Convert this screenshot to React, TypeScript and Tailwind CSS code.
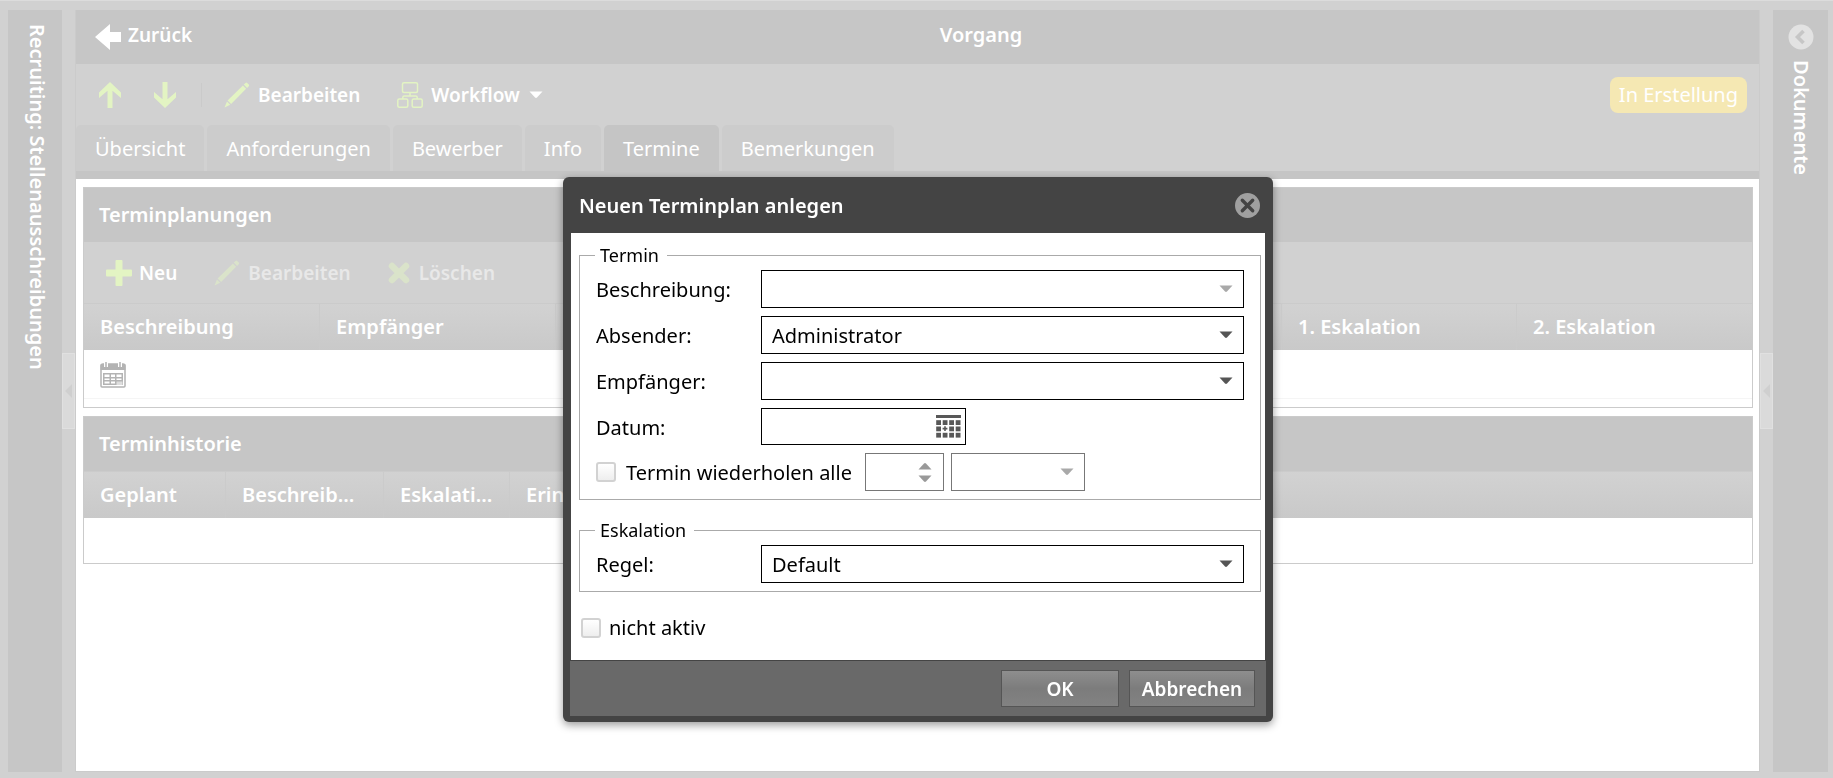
import type { ReactNode } from 'react';

function Pencil() {
  return (
    <svg width="26" height="26" viewBox="0 0 26 26" fill="currentColor" aria-hidden="true">
      <path d="M0.5 25.5 L3 19.5 L6.2 22.7 Z" />
      <path d="M3.6 18.6 L18.9 3.6 L22.1 6.8 L7.1 22.1 Z" />
      <path d="M19.8 2.6 L21.5 0.9 Q22.3 0.2 23.1 0.9 L24.8 2.6 Q25.6 3.4 24.8 4.3 L23.1 6 Z" />
    </svg>
  );
}

function ArrowUp() {
  return (
    <svg width="22" height="26" viewBox="0 0 22 26" fill="currentColor" aria-hidden="true">
      <path d="M11 0 L22 10.5 V16 L13.5 8.8 V26 H8.5 V8.8 L0 16 V10.5 Z" />
    </svg>
  );
}

function ArrowDown() {
  return (
    <svg width="22" height="26" viewBox="0 0 22 26" fill="currentColor" aria-hidden="true">
      <path d="M11 26 L22 15.5 V10 L13.5 17.2 V0 H8.5 V17.2 L0 10 V15.5 Z" />
    </svg>
  );
}

function WorkflowIcon() {
  return (
    <svg width="26" height="26" viewBox="0 0 26 26" fill="none" stroke="currentColor" strokeWidth="1.5" aria-hidden="true">
      <rect x="5.5" y="0.8" width="15" height="9.7" rx="1.5" />
      <rect x="0.8" y="17" width="10" height="8.2" rx="1.5" />
      <rect x="15.2" y="17" width="10" height="8.2" rx="1.5" />
      <path d="M13 10.5 V14 M5.8 17 V15.5 Q5.8 14 7.3 14 H18.7 Q20.2 14 20.2 15.5 V17" />
    </svg>
  );
}

function RowCalendar() {
  return (
    <svg width="26" height="26" viewBox="0 0 26 26" aria-hidden="true">
      <path d="M1 4 Q1 2 3 2 H23 Q25 2 25 4 V24 Q25 25 24 25 H2 Q1 25 1 24 Z" fill="#fff" stroke="#b3b3b3" strokeWidth="1.5" />
      <path d="M0.5 3 Q0.5 2 2 2 H24 Q25.5 2 25.5 3 V8 H0.5 Z" fill="#b3b3b3" />
      <path d="M6 0 V5 M20 0 V5" stroke="#fff" strokeWidth="4" />
      <path d="M6 0 V5 M20 0 V5" stroke="#b3b3b3" strokeWidth="1.5" />
      <rect x="3" y="11" width="20" height="12" fill="#b3b3b3" />
      <path d="M4.5 12.5h5v2.5h-5z M11 12.5h4v2.5h-4z M16.5 12.5h5v2.5h-5z M4.5 16.5h5v1.5h-5z M11 16.5h4v1.5h-4z M16.5 16.5h5v1.5h-5z M4.5 19.5h5v2h-5z M11 19.5h4v2h-4z" fill="#fff" />
      <path d="M16.5 19.5h6v3.5h-6z" fill="#ddd" />
    </svg>
  );
}

function PickerCalendar() {
  const cells = [0, 1, 2, 3];
  const rows = [0, 1, 2];
  return (
    <svg width="25" height="23" viewBox="0 0 25 23" fill="#585858" aria-hidden="true">
      <rect x="0" y="0" width="25" height="3" />
      {rows.map((r) =>
        cells.map((c) =>
          r === 1 && c === 1 ? (
            <path key="mid" d="M8.2 11.2h1.6v1.6h1.6v1.6H9.8V16H8.2v-1.6H6.6v-1.6h1.6z" />
          ) : (
            <rect key={`${r}-${c}`} x={c * 6.5 + 0.2} y={r * 6.3 + 5.2} width="4.8" height="4.8" />
          ),
        ),
      )}
    </svg>
  );
}

function Caret({ className }: { className: string }) {
  return (
    <svg width="14" height="8" viewBox="0 0 14 8" fill="currentColor" className={className} aria-hidden="true">
      <path d="M0.5 0.5 H13.5 L8 6.6 Q7 7.5 6 6.6 Z" />
    </svg>
  );
}

function SplitHandle() {
  return (
    <div className="flex w-[13px] shrink-0 items-center">
      <button
        type="button"
        aria-label="Bereich ein- oder ausklappen"
        className="flex h-19 w-full items-center justify-center border border-[#e0e0e0] bg-[#dadada] text-[#cfcfcf]"
      >
        <svg width="7" height="14" viewBox="0 0 7 14" fill="currentColor" aria-hidden="true">
          <path d="M7 0 V14 L0 7 Z" />
        </svg>
      </button>
    </div>
  );
}

function Panel({ title, children }: { title: string; children: ReactNode }) {
  return (
    <section className="border border-[#cbcbcb]">
      <h2 className="bg-[#c6c6c6] px-[15px] py-[13px] text-[20px] leading-7 font-semibold">{title}</h2>
      {children}
    </section>
  );
}

const headRow = 'bg-linear-to-b from-[#d2d2d2] to-[#c9c9c9] text-left';
const headCell = 'h-[47px] truncate border-t border-r border-[#cbcbcb] px-4 text-[20px] leading-7 font-semibold last:border-r-0';

const planCols = [
  { label: 'Beschreibung', width: 'w-[236px]' },
  { label: 'Empfänger', width: 'w-[236px]' },
  { label: '', width: 'w-auto' },
  { label: '1. Eskalation', width: 'w-[235px]' },
  { label: '2. Eskalation', width: 'w-[235px]' },
];

const historyCols = [
  { label: 'Geplant', width: 'w-[142px]' },
  { label: 'Beschreibung', width: 'w-[158px]' },
  { label: 'Eskalation', width: 'w-[126px]' },
  { label: 'Erinnerung', width: 'w-auto' },
];

const tabs = ['Übersicht', 'Anforderungen', 'Bewerber', 'Info', 'Termine', 'Bemerkungen'];

function SelectField({ id, label, value, muted }: { id: string; label: string; value?: string; muted?: boolean }) {
  return (
    <div className="flex items-center">
      <label htmlFor={id} className="w-[165px] shrink-0 pt-[2px]">
        {label}
      </label>
      <div className="relative flex-1">
        <select id={id} className="block h-[38px] w-full appearance-none border border-black bg-white px-[10px] pt-[2px]">
          <option>{value ?? ''}</option>
        </select>
        <Caret
          className={`pointer-events-none absolute top-1/2 right-[11px] -translate-y-1/2 ${muted ? 'text-[#a9a9a9]' : 'text-[#555]'}`}
        />
      </div>
    </div>
  );
}

const checkbox =
  'size-5 shrink-0 appearance-none rounded-[3px] border-2 border-[#d2d2d2] bg-linear-to-b from-white to-[#eee] checked:bg-[#999]';
const fieldset = 'border border-[#aaa] px-4 pt-px pb-2';
const legend = '-ml-[1px] pr-2 pl-[5px] text-[18px] leading-7';
const dialogButton =
  'h-[37px] border border-[#555] bg-linear-to-b from-[#8e8e8e] via-[#7c7c7c] to-[#828282] text-[19px] leading-7 font-semibold text-white';

function TerminDialog() {
  return (
    <div className="fixed inset-0 flex items-start justify-center pt-[177px] pl-[3px]">
      <div
        role="dialog"
        aria-labelledby="dialog-title"
        className="w-[710px] rounded-md bg-[#444] px-[7px] pb-[6px] text-[20px] leading-7 text-black shadow-[0_3px_9px_rgba(0,0,0,0.4)]"
      >
        <div className="flex h-14 items-center justify-between pr-[6px] pl-[9px]">
          <h1 id="dialog-title" className="pt-[2px] text-[20px] leading-7 font-semibold text-white">
            Neuen Terminplan anlegen
          </h1>
          <button type="button" aria-label="Schließen">
            <svg width="25" height="25" viewBox="0 0 25 25">
              <circle cx="12.5" cy="12.5" r="12.5" fill="#a0a0a0" />
              <path d="M7.3 7.3 L17.7 17.7 M17.7 7.3 L7.3 17.7" stroke="#444" strokeWidth="3.4" strokeLinecap="round" />
            </svg>
          </button>
        </div>

        <form>
          <div className="mx-px bg-white pt-2 pr-1 pb-[18px] pl-2">
            <fieldset className={fieldset}>
              <legend className={legend}>Termin</legend>
              <div className="flex flex-col gap-2">
                <SelectField id="beschreibung" label="Beschreibung:" muted />
                <SelectField id="absender" label="Absender:" value="Administrator" />
                <SelectField id="empfaenger" label="Empfänger:" />
                <div className="flex items-center">
                  <label htmlFor="datum" className="w-[165px] shrink-0 pt-[2px]">
                    Datum:
                  </label>
                  <div className="flex h-[37px] w-[205px] items-center border border-black pr-1">
                    <input id="datum" type="text" className="h-full min-w-0 flex-1 px-[10px] outline-none" />
                    <button type="button" aria-label="Datum wählen">
                      <PickerCalendar />
                    </button>
                  </div>
                </div>
                <div className="flex items-center">
                  <input id="wiederholen" type="checkbox" className={checkbox} />
                  <label htmlFor="wiederholen" className="w-[249px] pt-[2px] pl-[10px]">
                    Termin wiederholen alle
                  </label>
                  <div className="flex h-[38px] w-[79px] items-center border border-[#777] pr-[11px]">
                    <input type="text" aria-label="Intervall" className="h-full min-w-0 flex-1 px-2 outline-none" />
                    <div className="flex flex-col gap-[5px] text-[#999]">
                      <Caret className="rotate-180" />
                      <Caret className="" />
                    </div>
                  </div>
                  <div className="relative ml-[7px] w-[134px]">
                    <select aria-label="Einheit" className="block h-[38px] w-full appearance-none border border-[#777] bg-white px-[10px]">
                      <option></option>
                    </select>
                    <Caret className="pointer-events-none absolute top-1/2 right-[11px] -translate-y-1/2 text-[#a9a9a9]" />
                  </div>
                </div>
              </div>
            </fieldset>

            <fieldset className={`mt-4 ${fieldset}`}>
              <legend className={legend}>Eskalation</legend>
              <SelectField id="regel" label="Regel:" value="Default" />
            </fieldset>

            <div className="mt-[22px] flex items-center pl-[2px]">
              <input id="inaktiv" type="checkbox" className={checkbox} />
              <label htmlFor="inaktiv" className="pl-2">
                nicht aktiv
              </label>
            </div>
          </div>

          <div className="mt-px flex justify-end gap-[10px] bg-[#696969] py-[9px] pr-[11px]">
            <button type="button" className={`w-[118px] ${dialogButton}`}>
              OK
            </button>
            <button type="button" className={`w-[126px] ${dialogButton}`}>
              Abbrechen
            </button>
          </div>
        </form>
      </div>
    </div>
  );
}

export default function App() {
  return (
    <div className="flex min-h-screen border-t border-[#dcdcdc] bg-[#d1d1d1] pt-[9px] pr-[5px] pb-[6px] pl-2 font-['Noto_Sans','Open_Sans',sans-serif] text-white">
      <aside className="flex w-[54px] shrink-0 justify-center bg-[#c6c6c6] pt-[14px] pl-[3px]">
        <span className="text-[20px] leading-7 font-semibold [writing-mode:vertical-rl]">
          Recruiting: Stellenausschreibungen
        </span>
      </aside>
      <SplitHandle />

      <main className="flex min-w-0 flex-1 flex-col border border-t-0 border-[#cbcbcb] bg-white">
        <header className="flex h-[54px] items-center bg-[#c6c6c6] px-[19px] text-[19px] leading-7 font-semibold">
          <a href="#zurueck" className="flex items-center gap-[7px]">
            <svg width="26" height="26" viewBox="0 0 26 26" fill="currentColor" aria-hidden="true">
              <path d="M0 13 L15 0 V8 H26 V18 H15 V26 Z" />
            </svg>
            <span className="pb-1">Zurück</span>
          </a>
          <span className="flex-1 pb-1 pl-[30px] text-center text-[20px]">Vorgang</span>
        </header>

        <div className="flex h-[61px] items-center bg-[#d1d1d1] pr-3 pl-[23px] text-[19px] leading-7 font-semibold">
          <button type="button" aria-label="Vorheriger" className="text-[#e3f4c3]">
            <ArrowUp />
          </button>
          <button type="button" aria-label="Nächster" className="ml-[33px] text-[#e3f4c3]">
            <ArrowDown />
          </button>
          <span className="ml-[25px] h-6 w-px bg-[#cacaca]" />
          <button type="button" className="ml-[22px] flex items-center gap-2">
            <span className="text-[#e3f4c3]">
              <Pencil />
            </span>
            Bearbeiten
          </button>
          <button type="button" className="ml-[37px] flex items-center">
            <span className="mr-2 text-[#e3f4c3]">
              <WorkflowIcon />
            </span>
            Workflow
            <Caret className="ml-[9px]" />
          </button>
          <span className="ml-auto rounded-lg bg-[#f5e8b3] px-[9px] py-1 text-[20px] font-normal">In Erstellung</span>
        </div>

        <nav className="flex gap-[3px] border-b-8 border-[#c5c5c5] bg-[#d1d1d1]">
          {tabs.map((tab) => (
            <a
              key={tab}
              href="#tab"
              className={`rounded-t-[5px] px-[19px] pt-[10px] pb-2 text-[20px] leading-7 ${tab === 'Termine' ? 'bg-[#c5c5c5]' : 'bg-[#cccccc]'}`}
            >
              {tab}
            </a>
          ))}
        </nav>

        <div className="flex flex-col gap-2 py-2 pr-[6px] pl-[7px]">
          <Panel title="Terminplanungen">
            <div className="flex h-[61px] items-center bg-[#d1d1d1] pl-[22px] text-[19px] leading-7 font-semibold">
              <button type="button" className="flex items-center gap-[7px]">
                <svg width="26" height="26" viewBox="0 0 26 26" fill="#e3f4c3" aria-hidden="true">
                  <path d="M10.5 0 H15.5 Q16.5 0 16.5 1 V9.5 H25 Q26 9.5 26 10.5 V15.5 Q26 16.5 25 16.5 H16.5 V25 Q16.5 26 15.5 26 H10.5 Q9.5 26 9.5 25 V16.5 H1 Q0 16.5 0 15.5 V10.5 Q0 9.5 1 9.5 H9.5 V1 Q9.5 0 10.5 0 Z" />
                </svg>
                Neu
              </button>
              <button type="button" disabled className="ml-[37px] flex items-center gap-2 text-[#e8e8e8]">
                <span className="text-[#dae3ca]">
                  <Pencil />
                </span>
                Bearbeiten
              </button>
              <button type="button" disabled className="ml-[37px] flex items-center gap-[9px] text-[#e8e8e8]">
                <svg width="22" height="22" viewBox="0 0 22 22" stroke="#dae3ca" strokeWidth="6.5" strokeLinecap="round" aria-hidden="true">
                  <path d="M4 4 L18 18 M18 4 L4 18" />
                </svg>
                Löschen
              </button>
            </div>
            <table className="w-full table-fixed border-separate border-spacing-0">
              <thead>
                <tr className={headRow}>
                  {planCols.map((col) => (
                    <th key={col.label} className={`${col.width} ${headCell}`}>
                      {col.label}
                    </th>
                  ))}
                </tr>
              </thead>
              <tbody>
                <tr>
                  <td colSpan={5} className="h-[49px] border-b border-[#f5f5f5] px-4 pt-[2px]">
                    <RowCalendar />
                  </td>
                </tr>
              </tbody>
            </table>
            <div className="h-2" />
          </Panel>

          <Panel title="Terminhistorie">
            <table className="w-full table-fixed border-separate border-spacing-0">
              <thead>
                <tr className={headRow}>
                  {historyCols.map((col) => (
                    <th key={col.label} className={`${col.width} ${headCell}`}>
                      {col.label}
                    </th>
                  ))}
                </tr>
              </thead>
              <tbody>
                <tr>
                  <td colSpan={4} className="h-[45px]" />
                </tr>
              </tbody>
            </table>
          </Panel>
        </div>
      </main>

      <SplitHandle />
      <aside className="flex w-[55px] shrink-0 flex-col items-center gap-[10px] bg-[#c6c6c6] pt-[14px]">
        <button type="button" aria-label="Dokumente einblenden">
          <svg width="26" height="26" viewBox="0 0 26 26" fill="none">
            <circle cx="13" cy="13" r="12.5" fill="#e2e2e2" />
            <path d="M15.5 7 L9.5 13 L15.5 19" stroke="#c6c6c6" strokeWidth="3.6" />
          </svg>
        </button>
        <span className="text-[20px] leading-7 font-semibold [writing-mode:vertical-rl]">Dokumente</span>
      </aside>

      <TerminDialog />
    </div>
  );
}
